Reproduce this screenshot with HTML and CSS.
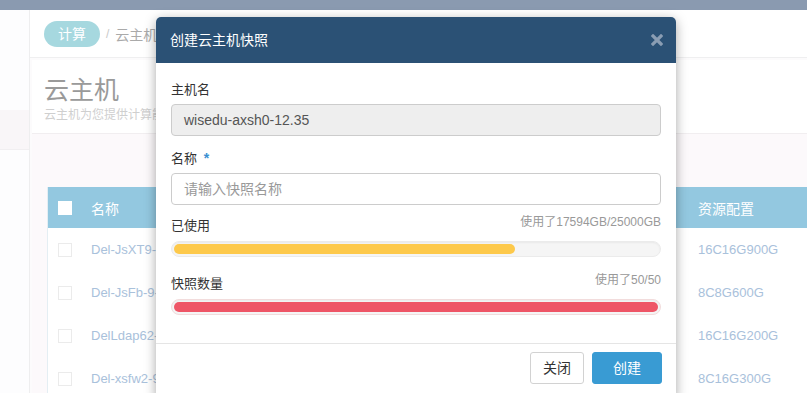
FILE: index.html
```html
<!DOCTYPE html>
<html lang="zh-CN">
<head>
<meta charset="utf-8">
<title>创建云主机快照</title>
<link rel="stylesheet" href="styles.css">
</head>
<body>
<div class="topbar"></div>
<div class="main">
  <aside class="sidebar"><div class="side-item"></div></aside>
  <div class="content">
    <div class="crumbbar">
      <span class="pill">计算</span>
      <span class="crumb-sep">/</span>
      <span class="crumb">云主机</span>
    </div>
    <div class="panel">
      <div class="panel-head">
        <h1 class="page-title">云主机</h1>
        <p class="page-desc">云主机为您提供计算能力，可以根据业务需要选择合适的规格，包括 CPU、内存、云硬盘等部件</p>
      </div>
      <div class="panel-body">
        <div class="table">
          <div class="tr th">
            <div class="c-check"><span class="box white"></span></div>
            <div class="c-name">名称</div>
            <div class="c-res">资源配置</div>
          </div>
          <div class="tr">
            <div class="c-check"><span class="box"></span></div>
            <div class="c-name link">Del-JsXT9-5kd2</div>
            <div class="c-res link">16C16G900G</div>
          </div>
          <div class="tr">
            <div class="c-check"><span class="box"></span></div>
            <div class="c-name link">Del-JsFb-9-ax</div>
            <div class="c-res link">8C8G600G</div>
          </div>
          <div class="tr">
            <div class="c-check"><span class="box"></span></div>
            <div class="c-name link">DelLdap62-01</div>
            <div class="c-res link">16C16G200G</div>
          </div>
          <div class="tr">
            <div class="c-check"><span class="box"></span></div>
            <div class="c-name link">Del-xsfw2-9a</div>
            <div class="c-res link">8C16G300G</div>
          </div>
        </div>
      </div>
    </div>
  </div>
</div>

<div class="modal">
  <div class="modal-head">
    <span class="modal-title">创建云主机快照</span>
    <svg class="close" width="12" height="12" viewBox="0 0 12 12" aria-hidden="true">
      <path d="M2 2 L10 10 M10 2 L2 10" stroke="#8a9db3" stroke-width="3.2" stroke-linecap="square"/>
    </svg>
  </div>
  <div class="modal-body">
    <div class="group g1">
      <label class="label">主机名</label>
      <div class="input disabled">wisedu-axsh0-12.35</div>
    </div>
    <div class="group g2">
      <label class="label">名称 <span class="star">*</span></label>
      <div class="input placeholder">请输入快照名称</div>
    </div>
    <div class="group usage">
      <div class="usage-row"><span class="label">已使用</span><span class="usage-note">使用了17594GB/25000GB</span></div>
      <div class="track"><div class="fill yellow" style="width:70.4%"></div></div>
    </div>
    <div class="group usage">
      <div class="usage-row"><span class="label">快照数量</span><span class="usage-note">使用了50/50</span></div>
      <div class="track red-track"><div class="fill red" style="width:100%"></div></div>
    </div>
  </div>
  <div class="modal-foot">
    <button class="btn btn-default">关闭</button>
    <button class="btn btn-primary">创建</button>
  </div>
</div>
</body>
</html>
```

FILE: styles.css
```css
* { box-sizing: border-box; }
html, body { margin: 0; padding: 0; }
body {
  width: 807px;
  height: 393px;
  overflow: hidden;
  position: relative;
  background: #ffffff;
  font-family: "Liberation Sans", "Noto Sans CJK SC", sans-serif;
  font-size: 13px;
  color: #333;
}
.topbar { height: 10px; background: #8a9ab0; }
.main { display: flex; height: 383px; }
.sidebar {
  width: 30px;
  flex: none;
  background: #fdfdfe;
  border-right: 1px solid #eeeeef;
}
.side-item { margin-top: 100px; height: 40px; background: #f9f6f8; border-bottom: 1px solid #f1eff1; }
.content { flex: 1; min-width: 0; background: #fcfbfc; }
.crumbbar {
  height: 48px;
  display: flex;
  align-items: center;
  padding-left: 14px;
  background: #fff;
  border-bottom: 1px solid #efeff0;
  font-size: 14px;
  gap: 6px;
}
.pill {
  display: inline-flex;
  align-items: center;
  justify-content: center;
  width: 56px;
  height: 26px;
  border-radius: 13px;
  background: #a6d8df;
  color: #fff;
  line-height: 26px;
}
.crumb-sep { color: #c9c9c9; font-size: 12px; }
.crumb { color: #aaa; }
.panel { margin: 2px 0 0 2px; background: #fff; }
.panel-head {
  padding: 15px 12px 10px;
  border-bottom: 1px solid #f1eef0;
}
.page-title {
  margin: 0;
  font-size: 25px;
  font-weight: normal;
  line-height: 30px;
  color: #9a9a9a;
}
.page-desc {
  margin: 2px 0 0;
  font-size: 12px;
  line-height: 16px;
  color: #cfcfcf;
  white-space: nowrap;
}
.panel-body {
  background: #fcf9fb;
  padding: 53px 0 0 15px;
  height: 260px;
}
.table { background: #fff; border-left: 1px solid #e4eef3; }
.tr { display: flex; align-items: center; height: 43px; }
.th { height: 41px; background: #93c8e0; color: #fff; font-size: 14px; }
.c-check { width: 43px; padding-left: 10px; display: flex; align-items: center; }
.c-name { width: 607px; }
.c-res { flex: 1; }
.box {
  display: block;
  width: 14px;
  height: 14px;
  border: 1px solid #ebebeb;
  background: #fff;
}
.box.white { border-color: #fff; }
.link { color: #a9c1db; font-size: 13px; }

/* modal */
.modal {
  position: absolute;
  left: 156px;
  top: 17px;
  width: 520px;
  height: 383px;
  background: #fff;
  border-radius: 5px;
  box-shadow: 0 3px 12px rgba(0, 0, 0, 0.35);
  overflow: hidden;
  display: flex;
  flex-direction: column;
}
.modal-head {
  height: 46px;
  flex: none;
  background: #2b5175;
  display: flex;
  align-items: center;
  justify-content: space-between;
  padding: 0 13px 0 14px;
}
.modal-title { color: #fff; font-size: 14px; line-height: 20px; }
.close { display: block; }
.modal-body { padding: 17px 15px 0; height: 281px; flex: none; border-bottom: 1px solid #e5e5e5; }
.group { margin-bottom: 14px; }
.g1 { margin-bottom: 12px; }
.g2 { margin-bottom: 8px; }
.label { display: block; font-size: 13px; line-height: 20px; color: #333; margin-bottom: 4px; }
.star { color: #3a8fd2; font-size: 14px; font-weight: bold; margin-left: 3px; }
.input {
  height: 32px;
  border: 1px solid #ccc;
  border-radius: 4px;
  padding: 0 12px;
  font-size: 14px;
  line-height: 30px;
}
.input.disabled { background: #eeeeee; color: #555; }
.input.placeholder { color: #999; background: #fff; }
.usage-row { display: flex; justify-content: space-between; align-items: flex-start; margin-bottom: 5px; }
.usage-row .label { margin: 3px 0 0; }
.usage-note { font-size: 12px; line-height: 18px; color: #999; }
.track {
  height: 16px;
  border-radius: 8px;
  background: #f5f5f5;
  border: 1px solid #ebebeb;
  padding: 2px;
  box-shadow: inset 0 1px 2px rgba(0, 0, 0, 0.05);
}
.red-track { border-color: #f2dcdc; }
.fill { height: 100%; border-radius: 5px; }
.yellow { background: #fdc94b; }
.red { background: #ee5566; }
.modal-foot {
  flex: 1;
  display: flex;
  justify-content: flex-end;
  align-items: flex-start;
  gap: 8px;
  padding: 8px 14px 0;
}
.btn {
  height: 32px;
  border-radius: 3px;
  font-family: inherit;
  font-size: 14px;
  line-height: 30px;
  padding: 0;
  cursor: pointer;
}
.btn-default { width: 54px; background: #fff; border: 1px solid #d2d2d2; color: #333; }
.btn-primary { width: 70px; background: #399bd3; border: 1px solid #399bd3; color: #fff; }
```
